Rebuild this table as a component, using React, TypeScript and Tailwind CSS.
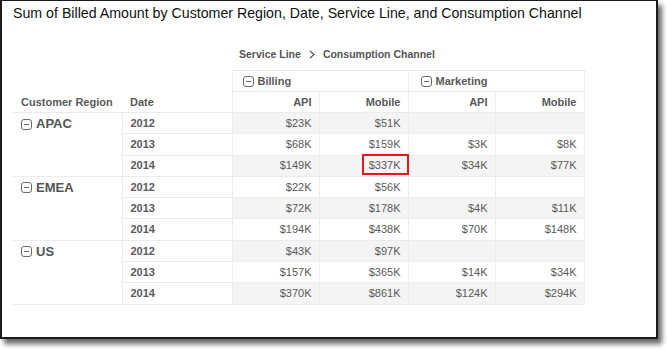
import React from 'react';

const font = { fontFamily: '"Liberation Sans", Arial, sans-serif' };

interface RegionData {
  name: string;
  rows: { year: string; values: string[] }[];
}

const regions: RegionData[] = [
  {
    name: 'APAC',
    rows: [
      { year: '2012', values: ['$23K', '$51K', '', ''] },
      { year: '2013', values: ['$68K', '$159K', '$3K', '$8K'] },
      { year: '2014', values: ['$149K', '$337K', '$34K', '$77K'] },
    ],
  },
  {
    name: 'EMEA',
    rows: [
      { year: '2012', values: ['$22K', '$56K', '', ''] },
      { year: '2013', values: ['$72K', '$178K', '$4K', '$11K'] },
      { year: '2014', values: ['$194K', '$438K', '$70K', '$148K'] },
    ],
  },
  {
    name: 'US',
    rows: [
      { year: '2012', values: ['$43K', '$97K', '', ''] },
      { year: '2013', values: ['$157K', '$365K', '$14K', '$34K'] },
      { year: '2014', values: ['$370K', '$861K', '$124K', '$294K'] },
    ],
  },
];

const MinusBox = () => (
  <svg width="11" height="11" viewBox="0 0 11 11" className="shrink-0">
    <rect x="0.5" y="0.5" width="10" height="10" rx="2.5" fill="none" stroke="#6b6b6b" strokeWidth="1" />
    <line x1="3" y1="5.5" x2="8" y2="5.5" stroke="#6b6b6b" strokeWidth="1" />
  </svg>
);

const App: React.FC = () => {
  let rowIndex = 0;

  return (
    <div className="w-[667px] h-[349px] bg-white" style={font}>
      <div className="w-[658px] h-[339px] bg-white border-t border-l-2 border-r-2 border-b-2 border-[#1c1c1c] shadow-[4px_5px_5px_rgba(0,0,0,0.6)]">
        {/* Title */}
        <div className="pl-[11px] pt-[4px] text-[14.2px] leading-[17px] text-[#111]">
          Sum of Billed Amount by Customer Region, Date, Service Line, and Consumption Channel
        </div>

        {/* Column path */}
        <div className="mt-[25px] ml-[237px] flex items-center gap-[8px] text-[10.5px] leading-[14px] font-bold text-[#555]">
          <span>Service Line</span>
          <svg width="6" height="9" viewBox="0 0 6 9">
            <path d="M1 1 L5 4.5 L1 8" fill="none" stroke="#555" strokeWidth="1.2" />
          </svg>
          <span>Consumption Channel</span>
        </div>

        {/* Pivot table */}
        <table className="ml-[11px] mt-[9px] table-fixed border-collapse text-[11px] text-[#5a5a5a]">
          <colgroup>
            <col className="w-[109px]" />
            <col className="w-[110px]" />
            <col className="w-[87px]" />
            <col className="w-[89px]" />
            <col className="w-[87px]" />
            <col className="w-[89px]" />
          </colgroup>
          <thead>
            <tr className="h-[21px]">
              <th />
              <th />
              <th colSpan={2} className="border border-[#ececec] pl-[10px] text-left font-bold">
                <div className="flex items-center gap-[4px]">
                  <MinusBox />
                  <span>Billing</span>
                </div>
              </th>
              <th colSpan={2} className="border border-[#ececec] pl-[12px] text-left font-bold">
                <div className="flex items-center gap-[4px]">
                  <MinusBox />
                  <span>Marketing</span>
                </div>
              </th>
            </tr>
            <tr className="h-[21px]">
              <th className="border-b border-[#ececec] pl-[8px] text-left font-bold">Customer Region</th>
              <th className="border-b border-[#ececec] pl-[8px] text-left font-bold">Date</th>
              {['API', 'Mobile', 'API', 'Mobile'].map((h, i) => (
                <th key={i} className="border border-[#ececec] pr-[7px] text-right font-bold">
                  {h}
                </th>
              ))}
            </tr>
          </thead>
          <tbody>
            {regions.map((region) =>
              region.rows.map((row, r) => {
                const shaded = rowIndex % 2 === 0;
                rowIndex++;
                return (
                  <tr key={region.name + row.year} className="h-[21.3px]">
                    {r === 0 && (
                      <td rowSpan={3} className="border-b border-[#ececec] pl-[8px] pt-[3px] align-top">
                        <div className="flex items-center gap-[4px] text-[13px] leading-[16px] font-bold text-[#555]">
                          <MinusBox />
                          <span>{region.name}</span>
                        </div>
                      </td>
                    )}
                    <td className="border border-[#ececec] pl-[8px] font-bold">{row.year}</td>
                    {row.values.map((v, i) => (
                      <td
                        key={i}
                        className={`border border-[#ececec] pr-[7px] text-right ${shaded ? 'bg-[#f4f4f4]' : 'bg-white'}`}
                      >
                        {region.name === 'APAC' && row.year === '2014' && i === 1 ? (
                          <span className="relative">
                            {v}
                            <span className="absolute -left-[7px] -right-[8px] -top-[5px] -bottom-[4px] border-2 border-[#e3171c]" />
                          </span>
                        ) : (
                          v
                        )}
                      </td>
                    ))}
                  </tr>
                );
              })
            )}
          </tbody>
        </table>
      </div>
    </div>
  );
};

export default App;
